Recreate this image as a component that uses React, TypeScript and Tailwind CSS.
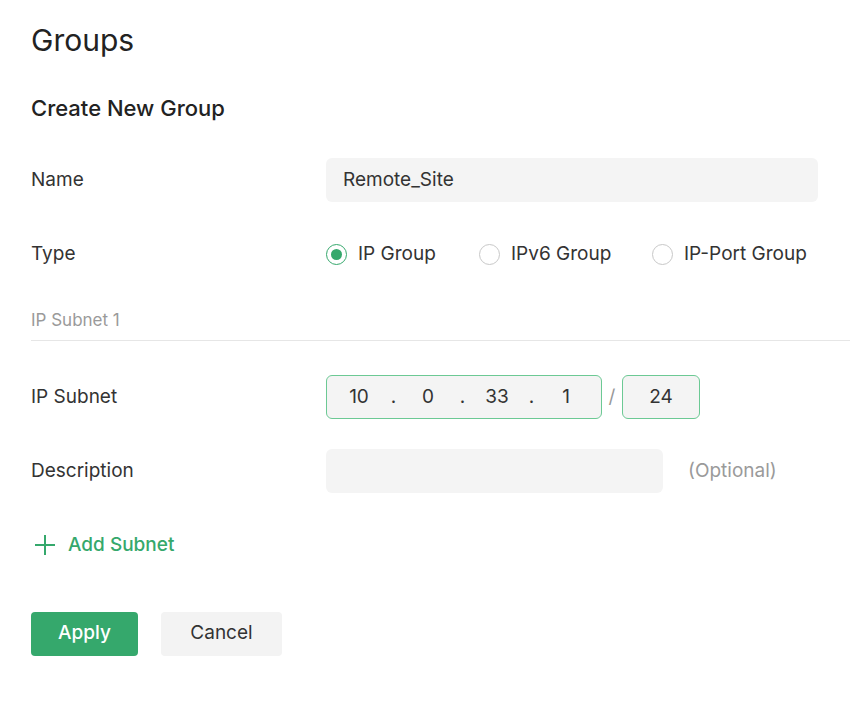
import React from "react";

const Radio = ({ checked, label }: { checked?: boolean; label: string }) => (
  <label className="flex items-center gap-[11px]">
    <span
      className={`flex h-[21px] w-[21px] items-center justify-center rounded-full border ${
        checked ? "border-[#35a86c]" : "border-[#c8c8c8]"
      } bg-white`}
    >
      {checked && <span className="h-[11px] w-[11px] rounded-full bg-[#35a86c]" />}
    </span>
    <span className="text-[19px] text-[#333]">{label}</span>
  </label>
);

const Row = ({ label, children }: { label: string; children: React.ReactNode }) => (
  <div className="flex h-[44px] items-center">
    <div className="w-[295px] text-[19px] text-[#333]">{label}</div>
    {children}
  </div>
);

export default function App() {
  const octets = ["10", "0", "33", "1"];
  return (
    <div
      className="min-h-[714px] w-[850px] bg-white pl-[31px] text-[#333]"
      style={{ fontFamily: "Inter, 'Noto Sans', sans-serif" }}
    >
      <h1 className="pt-[20px] text-[30px] leading-[40px] text-[#222]">Groups</h1>
      <h2 className="mt-[34px] text-[22px] font-medium leading-[28px] text-[#222]">
        Create New Group
      </h2>

      <div className="mt-[36px]">
        <Row label="Name">
          <div className="flex h-[44px] w-[492px] items-center rounded-[6px] bg-[#f4f4f4] pl-[17px] text-[19px] text-[#333]">
            Remote_Site
          </div>
        </Row>
      </div>

      <div className="mt-[30px]">
        <Row label="Type">
          <div className="flex items-center">
            <div className="w-[153px]">
              <Radio checked label="IP Group" />
            </div>
            <div className="w-[173px]">
              <Radio label="IPv6 Group" />
            </div>
            <Radio label="IP-Port Group" />
          </div>
        </Row>
      </div>

      <div className="mt-[32px] border-b border-[#e6e6e6] pb-[8px] text-[17px] leading-[24px] text-[#9a9a9a]">
        IP Subnet 1
      </div>

      <div className="mt-[34px]">
        <Row label="IP Subnet">
          <div className="flex items-center">
            <div className="flex h-[44px] w-[276px] items-center rounded-[6px] border border-[#6cc994] bg-[#f4f4f4] px-[8px] text-[19px] text-[#333]">
              {octets.map((o, i) => (
                <React.Fragment key={i}>
                  <span className="w-[48px] text-center">{o}</span>
                  {i < 3 && <span className="w-[21px] text-center">.</span>}
                </React.Fragment>
              ))}
            </div>
            <span className="w-[20px] text-center text-[19px] text-[#999]">/</span>
            <div className="flex h-[44px] w-[78px] items-center justify-center rounded-[6px] border border-[#6cc994] bg-[#f4f4f4] text-[19px] text-[#333]">
              24
            </div>
          </div>
        </Row>
      </div>

      <div className="mt-[30px]">
        <Row label="Description">
          <div className="h-[44px] w-[337px] rounded-[6px] bg-[#f4f4f4]" />
          <span className="ml-[25px] text-[19px] text-[#9a9a9a]">(Optional)</span>
        </Row>
      </div>

      <div className="mt-[38px] flex items-center gap-[12px] pl-[3px] text-[19px] font-medium text-[#35a86c]">
        <svg width="22" height="22" viewBox="0 0 22 22" fill="none" stroke="#35a86c" strokeWidth="2">
          <path d="M11 1v20M1 11h20" />
        </svg>
        <span>Add Subnet</span>
      </div>

      <div className="mt-[52px] flex gap-[23px]">
        <button className="h-[44px] w-[107px] rounded-[4px] bg-[#35a86c] text-[19px] font-medium text-white">
          Apply
        </button>
        <button className="h-[44px] w-[121px] rounded-[4px] bg-[#f3f3f3] text-[19px] text-[#333]">
          Cancel
        </button>
      </div>
    </div>
  );
}
